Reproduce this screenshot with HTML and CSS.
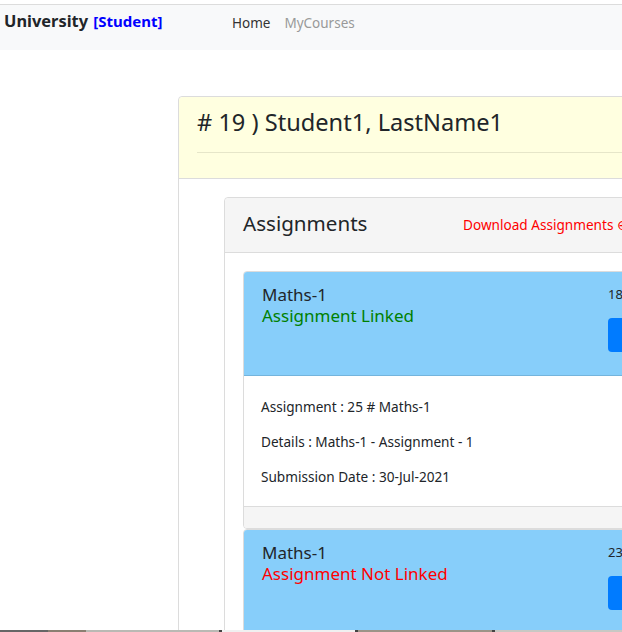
FILE: index.html
```html
<!DOCTYPE html>
<html lang="en">
<head>
<meta charset="utf-8">
<title>University - Student</title>
<link rel="stylesheet" href="styles.css">
</head>
<body>
<header class="navbar">
  <div class="brand">University <span class="role">[Student]</span></div>
  <nav class="nav">
    <a class="nav-link active" href="#">Home</a>
    <a class="nav-link" href="#">MyCourses</a>
  </nav>
</header>
<main class="main">
  <section class="card outer">
    <div class="outer-header">
      <h1 class="title"># 19 ) Student1, LastName1</h1>
      <hr class="rule">
    </div>
    <div class="outer-body">
      <section class="card inner">
        <div class="inner-header">
          <h2 class="inner-title">Assignments</h2>
          <a class="download" href="#">Download Assignments ⊕</a>
        </div>
        <div class="inner-body">
          <article class="item">
            <div class="item-header">
              <div class="item-left">
                <div class="subject">Maths-1</div>
                <div class="status linked">Assignment Linked</div>
              </div>
              <div class="item-right">
                <div class="date">18-Jul-2021</div>
                <button class="btn">Download</button>
              </div>
            </div>
            <div class="item-body">
              <p>Assignment : 25 # Maths-1</p>
              <p>Details : Maths-1 - Assignment - 1</p>
              <p>Submission Date : 30-Jul-2021</p>
            </div>
            <div class="item-footer"></div>
          </article>
          <article class="item">
            <div class="item-header">
              <div class="item-left">
                <div class="subject">Maths-1</div>
                <div class="status not-linked">Assignment Not Linked</div>
              </div>
              <div class="item-right">
                <div class="date">23-Jul-2021</div>
                <button class="btn">Upload</button>
              </div>
            </div>
            <div class="item-body">
              <p>Assignment : 26 # Maths-1</p>
              <p>Details : Maths-1 - Assignment - 2</p>
              <p>Submission Date : 05-Aug-2021</p>
            </div>
          </article>
        </div>
      </section>
    </div>
  </section>
</main>
<div class="taskbar"></div>
</body>
</html>
```

FILE: styles.css
```css
html, body {
  margin: 0;
  height: 100%;
  overflow: hidden;
}
body {
  padding-top: 4px;
  box-sizing: border-box;
  font-family: "Noto Sans", "Open Sans", sans-serif;
  color: #212529;
  background: #fff;
}
.navbar {
  border-top: 1px solid #dcdcdc;
  background: #f8f9fa;
  height: 45px;
  display: flex;
  align-items: flex-start;
  padding-left: 4px;
}
.brand {
  width: 228px;
  font-weight: 700;
  font-size: 16.4px;
  line-height: 24px;
  margin-top: 4px;
  color: #212529;
}
.role {
  color: #0000ff;
  font-size: 15px;
  margin-left: 1px;
}
.nav {
  display: flex;
  gap: 14px;
  margin-top: 8px;
}
.nav-link {
  font-size: 13.5px;
  line-height: 20px;
  color: #999;
  text-decoration: none;
}
.nav-link.active {
  color: #333;
}
.main {
  padding: 46px 0 0 178px;
}
.card {
  border: 1px solid #dcdcdc;
  border-radius: 4px;
  background: #fff;
}
.outer {
  width: 1000px;
  height: 1200px;
}
.outer-header {
  background: #ffffe0;
  padding: 10px 18px 25px;
  border-bottom: 1px solid #dcdcdc;
  border-radius: 4px 4px 0 0;
}
.title {
  margin: 0;
  font-size: 23.6px;
  font-weight: 400;
  line-height: 31px;
}
.rule {
  margin: 14px 0 0;
  border: 0;
  border-top: 1px solid #e6e6c9;
}
.outer-body {
  padding: 18px 0 0 45px;
}
.inner {
  width: 900px;
}
.inner-header {
  display: grid;
  grid-template-columns: 220px auto;
  align-items: center;
  height: 55px;
  padding: 0 18px 4px;
  box-sizing: border-box;
  background: #f5f5f5;
  border-bottom: 1px solid #dcdcdc;
  border-radius: 4px 4px 0 0;
}
.inner-title {
  margin: 0;
  font-size: 20.6px;
  font-weight: 400;
  line-height: 28px;
}
.download {
  color: #ff0000;
  font-size: 13.6px;
  text-decoration: none;
  padding-top: 2px;
}
.inner-body {
  padding: 18px;
}
.item {
  border: 1px solid #dcdcdc;
  border-radius: 4px;
  overflow: hidden;
}
.item-header {
  display: grid;
  grid-template-columns: 346px auto;
  padding: 12px 18px 23px;
  background: #87cefa;
  border-bottom: 1px solid #74b4dc;
}
.subject, .status {
  font-size: 17px;
  line-height: 21px;
}
.linked {
  color: #008000;
}
.not-linked {
  color: #ff0000;
}
.date {
  font-size: 13px;
  line-height: 21px;
}
.btn {
  display: block;
  margin-top: 13px;
  height: 34px;
  padding: 0 14px;
  border: 0;
  border-radius: 4px;
  background: #007bff;
  color: #fff;
  font: inherit;
  font-size: 14px;
}
.item-body {
  padding: 20px 17px 19px;
}
.item-body p {
  margin: 0 0 14px;
  font-size: 13.6px;
  line-height: 21px;
}
.item-body p:last-child {
  margin-bottom: 0;
}
.item-footer {
  height: 21px;
  background: #f5f5f5;
  border-top: 1px solid #dcdcdc;
}
.taskbar {
  position: fixed;
  left: 0;
  right: 0;
  bottom: 0;
  height: 2px;
  background: linear-gradient(to right, #666 0 48px, #8a7f72 48px 86px, #b9b9b4 86px 219px, #444 219px 222px, #f0f0f0 222px 355px, #444 355px 358px, #9c9488 358px 492px, #444 492px 495px, #c8c8c4 495px);
}
```
